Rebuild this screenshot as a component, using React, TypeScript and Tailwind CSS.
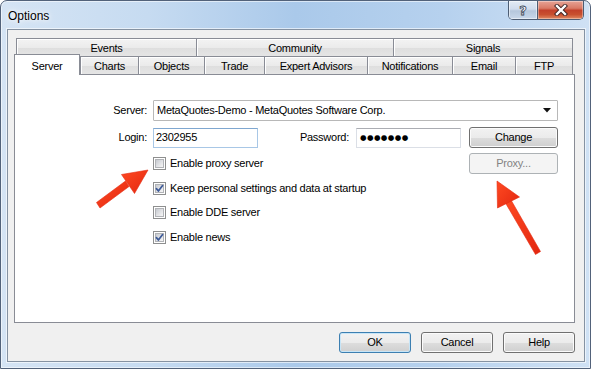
import React from "react";

function Tab({ w, label, first }: { w: number; label: string; first?: boolean }) {
  return (
    <div
      className={`h-full flex items-center justify-center border-t border-l border-r border-[#898c95] bg-[linear-gradient(180deg,#f3f3f3_0%,#ebebeb_50%,#dedede_51%,#e5e5e5_100%)] shadow-[inset_1px_1px_0_#ffffff] ${first ? "" : "-ml-px"}`}
      style={{ width: w }}
    >
      <span className="pt-[1px]">{label}</span>
    </div>
  );
}

function Check({ checked }: { checked?: boolean }) {
  return (
    <span className="relative w-[13px] h-[13px] border border-[#8e8f8f] bg-white p-[1px] flex shrink-0">
      <span className="flex-1 border border-[#b1b3b7] bg-[linear-gradient(135deg,#c6cad0_0%,#e2e3e6_55%,#f6f6f6_100%)]" />
      {checked && (
        <svg className="absolute left-0 top-0" width="11" height="11" viewBox="0 0 11 11">
          <path d="M2.4 5.6 L4.4 8 L8.6 2.6" stroke="#3d5a98" strokeWidth="1.7" fill="none" strokeLinecap="round" strokeLinejoin="round" />
        </svg>
      )}
    </span>
  );
}

function Btn({
  w,
  label,
  def,
  disabled,
}: {
  w: number;
  label: string;
  def?: boolean;
  disabled?: boolean;
}) {
  const base = "h-[21px] flex items-center justify-center rounded-[3px] border shrink-0";
  const cls = disabled
    ? "border-[#adb2b5] bg-[#f4f4f4] text-[#838383]"
    : def
    ? "border-[#3c7fb1] bg-[linear-gradient(180deg,#f2f2f2_0%,#ebebeb_50%,#dddddd_51%,#cfcfcf_100%)] shadow-[inset_0_0_0_1px_#c7e5f7]"
    : "border-[#707070] bg-[linear-gradient(180deg,#f2f2f2_0%,#ebebeb_50%,#dddddd_51%,#cfcfcf_100%)] shadow-[inset_0_0_0_1px_#fbfbfb]";
  return (
    <div className={`${base} ${cls}`} style={{ width: w }}>
      {label}
    </div>
  );
}

export default function App() {
  return (
    <div className="relative w-[591px] h-[369px] bg-white font-['Liberation_Sans',Arial,sans-serif] text-[11px] tracking-[-0.25px] text-black select-none overflow-hidden">
      <div className="w-[591px] h-[369px] rounded-t-[7px] border border-[#52627a] bg-[linear-gradient(90deg,#d5e4f4_0%,#c6dbf1_25%,#aac9ea_50%,#b6d1ee_75%,#cfe1f4_100%)] flex flex-col shadow-[inset_0_0_0_1px_rgba(255,255,255,0.55)]">
        {/* title bar */}
        <div className="h-[28px] flex items-start justify-between shrink-0">
          <div className="pl-[7px] pt-[6px] text-[12px] tracking-normal text-black [text-shadow:0_0_8px_#ffffff,0_0_4px_#ffffff]">
            Options
          </div>
          <div className="flex mr-[6px] border border-t-0 border-[#4d5d73] rounded-b-[5px] overflow-hidden h-[19px]">
            <div className="w-[29px] h-full flex items-center justify-center bg-[linear-gradient(180deg,#e3ebf4_0%,#d0dced_45%,#b5c7dc_55%,#c9d8ea_100%)] border-r border-[#4d5d73] shadow-[inset_0_0_0_1px_rgba(255,255,255,0.5)]">
              <span className="text-white text-[13px] font-bold tracking-normal font-['DejaVu_Sans',sans-serif] [-webkit-text-stroke:0.8px_#3a4656] leading-none">
                ?
              </span>
            </div>
            <div className="w-[45px] h-full flex items-center justify-center bg-[linear-gradient(180deg,#e6a395_0%,#d97a66_40%,#c2412a_52%,#c8502f_75%,#e08a63_100%)] shadow-[inset_0_0_0_1px_rgba(255,255,255,0.35)]">
              <svg width="14" height="12" viewBox="0 0 14 12">
                <path d="M3 2 L11 10 M11 2 L3 10" stroke="#3b2020" strokeWidth="4.2" strokeLinecap="square" />
                <path d="M3 2 L11 10 M11 2 L3 10" stroke="#ffffff" strokeWidth="2.4" strokeLinecap="square" />
              </svg>
            </div>
          </div>
        </div>

        {/* client area */}
        <div className="ml-[6px] mr-[5px] mb-[6px] flex-1 border border-[#8592a2] bg-[#f0f0f0] shadow-[0_0_0_1px_rgba(255,255,255,0.6)] pt-[8px] pl-[6px] flex flex-col">
          <div className="w-[561px] flex flex-col">
            {/* tab row 1 */}
            <div className="h-[18px] flex pl-[2px]">
              <Tab w={181} label="Events" first />
              <Tab w={198} label="Community" />
              <Tab w={180} label="Signals" />
            </div>
            {/* tab row 2 */}
            <div className="h-[18px] flex items-end">
              <div className="relative z-10 w-[66px] h-[21px] -mb-px bg-white border-t border-l border-r border-[#898c95] flex items-start justify-center pt-[3px]">
                Server
              </div>
              <div className="flex h-[18px]">
                <Tab w={59} label="Charts" first />
                <Tab w={67} label="Objects" />
                <Tab w={61} label="Trade" />
                <Tab w={104} label="Expert Advisors" />
                <Tab w={86} label="Notifications" />
                <Tab w={64} label="Email" />
                <Tab w={58} label="FTP" />
              </div>
            </div>
            {/* panel */}
            <div className="h-[249px] border border-[#898c95] bg-white pt-[25px] pl-[86px] pr-[16px] flex flex-col">
              {/* server row */}
              <div className="flex items-center h-[21px]">
                <div className="w-[46px] text-right">Server:</div>
                <div className="ml-[6px] flex-1 h-[21px] border border-[#b8b8b8] rounded-[1px] flex items-center pl-[3px] pr-[6px] bg-white">
                  <span className="flex-1">MetaQuotes-Demo - MetaQuotes Software Corp.</span>
                  <svg width="8" height="5" viewBox="0 0 8 5">
                    <path d="M0 0 H8 L4 4.5 Z" fill="#111" />
                  </svg>
                </div>
              </div>
              {/* login row */}
              <div className="flex items-center h-[21px] mt-[6px]">
                <div className="w-[46px] text-right">Login:</div>
                <div className="ml-[6px] w-[105px] h-[20px] border border-[#a8c7e6] border-t-[#7fa7d0] flex items-center pl-[2px] bg-white">
                  2302955
                </div>
                <div className="w-[91px] text-right">Password:</div>
                <div className="ml-[7px] w-[105px] h-[20px] border border-[#dbdfe6] border-t-[#abadb3] flex items-center pl-[3px] bg-white">
                  <span className="font-['DejaVu_Sans',sans-serif] text-[7.5px] tracking-[0.4px] leading-none">●●●●●●●</span>
                </div>
                <div className="ml-auto">
                  <Btn w={89} label="Change" />
                </div>
              </div>
              {/* checkboxes + proxy */}
              <div className="flex mt-[5px]">
                <div className="ml-[52px] flex flex-col flex-1">
                  <div className="h-[21px] flex items-center gap-[4px]">
                    <Check />
                    <span>Enable proxy server</span>
                  </div>
                  <div className="h-[25px] flex items-center gap-[4px] pt-[3px]">
                    <Check checked />
                    <span>Keep personal settings and data at startup</span>
                  </div>
                  <div className="h-[24px] flex items-center gap-[4px] pt-[3px]">
                    <Check />
                    <span>Enable DDE server</span>
                  </div>
                  <div className="h-[25px] flex items-center gap-[4px] pt-[3px]">
                    <Check checked />
                    <span>Enable news</span>
                  </div>
                </div>
                <Btn w={89} label="Proxy..." disabled />
              </div>
            </div>
            {/* bottom buttons */}
            <div className="mt-[9px] flex justify-end gap-[10px]">
              <Btn w={72} label="OK" def />
              <Btn w={72} label="Cancel" />
              <Btn w={72} label="Help" />
            </div>
          </div>
        </div>
      </div>

      {/* red arrows */}
      <svg className="absolute left-0 top-0 pointer-events-none" width="591" height="369" viewBox="0 0 591 369">
        <defs>
          <linearGradient id="ar" x1="0" y1="0" x2="1" y2="1">
            <stop offset="0" stopColor="#ff4a22" />
            <stop offset="1" stopColor="#e2260f" />
          </linearGradient>
        </defs>
        <g fill="url(#ar)" stroke="#e42a10" strokeWidth="0.6" strokeLinejoin="round">
          <polygon points="96.5,202.5 125.5,181 129,186.5 100,208" />
          <polygon points="148,170 121.5,174.5 134.5,193.5" />
          <polygon points="540.5,251.5 511,200 505.5,203 535.5,254.5" />
          <polygon points="497,181 497.5,208 519.5,197" />
        </g>
      </svg>
    </div>
  );
}
